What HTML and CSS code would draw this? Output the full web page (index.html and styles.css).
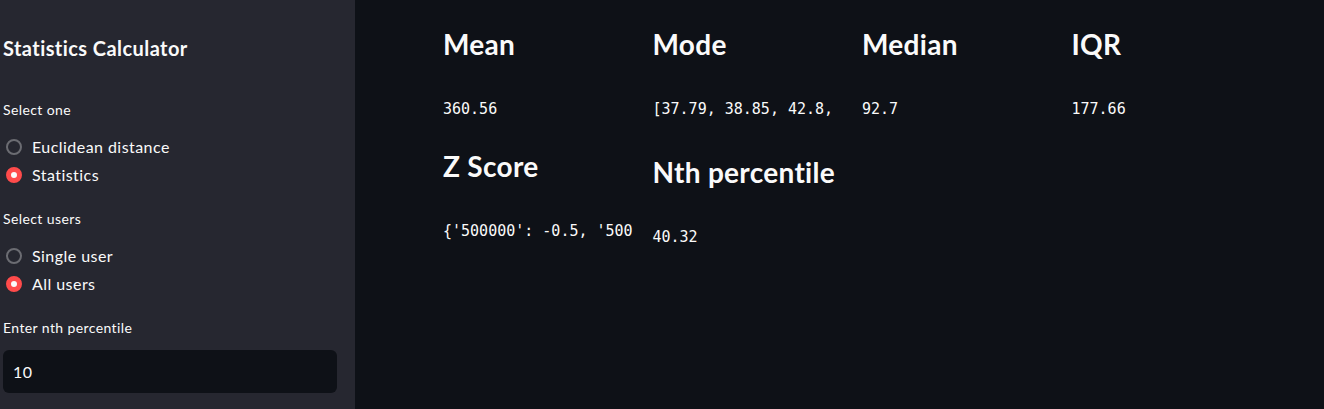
FILE: index.html
```html
<!DOCTYPE html>
<html>
<head>
<meta charset="utf-8">
<link rel="stylesheet" href="styles.css">
</head>
<body>
<div class="app">
  <aside class="sidebar">
    <h1 class="side-title">Statistics Calculator</h1>
    <div class="field">
      <div class="label">Select one</div>
      <div class="radios">
        <div class="radio"><span class="dot"></span><span>Euclidean distance</span></div>
        <div class="radio on"><span class="dot"></span><span>Statistics</span></div>
      </div>
    </div>
    <div class="field">
      <div class="label">Select users</div>
      <div class="radios">
        <div class="radio"><span class="dot"></span><span>Single user</span></div>
        <div class="radio on"><span class="dot"></span><span>All users</span></div>
      </div>
    </div>
    <div class="field">
      <div class="label label-input">Enter nth percentile</div>
      <div class="input">10</div>
    </div>
  </aside>
  <main class="main">
    <div class="cols">
      <div class="col">
        <h2 class="h">Mean</h2>
        <div class="val">360.56</div>
        <h2 class="h">Z Score</h2>
        <div class="val">{'500000': -0.5, '500</div>
      </div>
      <div class="col">
        <h2 class="h">Mode</h2>
        <div class="val tall">[37.79, 38.85, 42.8,</div>
        <h2 class="h">Nth percentile</h2>
        <div class="val">40.32</div>
      </div>
      <div class="col">
        <h2 class="h">Median</h2>
        <div class="val">92.7</div>
      </div>
      <div class="col">
        <h2 class="h">IQR</h2>
        <div class="val">177.66</div>
      </div>
    </div>
  </main>
</div>
</body>
</html>
```
FILE: styles.css
```css
* { box-sizing: border-box; }
html, body { margin: 0; padding: 0; height: 100%; }
body {
  background: #0e1117;
  color: #fafafa;
  font-family: Lato, "Noto Sans", sans-serif;
  overflow: hidden;
}
.app { display: flex; height: 409px; }
.sidebar {
  width: 355px;
  flex: none;
  background: #262730;
  padding: 35px 18px 0 3px;
}
.side-title {
  margin: 0 0 40px;
  font-size: 20px;
  font-weight: 700;
  line-height: 26px;
  letter-spacing: 0.43px;
}
.field { margin-bottom: 25px; }
.label {
  font-size: 14px;
  line-height: 18px;
  margin-bottom: 18px;
  letter-spacing: 0.4px;
}
.label-input { margin-bottom: 13px; }
.radios { display: flex; flex-direction: column; gap: 8px; }
.radio {
  display: flex;
  align-items: center;
  gap: 10px;
  font-size: 16px;
  line-height: 20px;
  padding-left: 3px;
  letter-spacing: 0.45px;
}
.dot {
  width: 16px; height: 16px;
  border-radius: 50%;
  border: 2px solid #6b6c72;
  flex: none;
}
.radio.on .dot {
  border: 5px solid #ff4b4b;
  background: #fafafa;
}
.input {
  height: 43px;
  background: #0e1117;
  border-radius: 6px;
  padding: 0 10px;
  display: flex;
  align-items: center;
  font-size: 16px;
  letter-spacing: 0.4px;
}
.main { flex: 1; padding: 24px 0 0 88px; }
.cols {
  display: grid;
  grid-template-columns: repeat(4, 193.5px);
  column-gap: 16px;
}
.col { min-width: 0; }
.h {
  margin: 0;
  font-size: 28px;
  font-weight: 700;
  line-height: 40px;
  letter-spacing: 0.3px;
}
.val {
  font-family: "DejaVu Sans Mono", monospace;
  font-size: 15px;
  line-height: 20px;
  white-space: nowrap;
  margin: 35px 0 27px;
}
.val.tall { margin-bottom: 33px; }
```
